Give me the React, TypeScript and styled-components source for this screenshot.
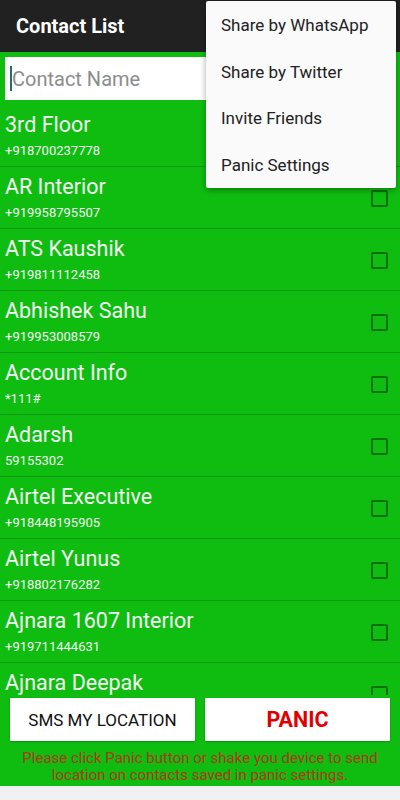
import React from "react";
import styled, { createGlobalStyle } from "styled-components";

interface TypesContact {
  name: string
  phone: string
}

const contacts: TypesContact[] = [
  { name: "3rd Floor", phone: "+918700237778" },
  { name: "AR Interior", phone: "+919958795507" },
  { name: "ATS Kaushik", phone: "+919811112458" },
  { name: "Abhishek Sahu", phone: "+919953008579" },
  { name: "Account Info", phone: "*111#" },
  { name: "Adarsh", phone: "59155302" },
  { name: "Airtel Executive", phone: "+918448195905" },
  { name: "Airtel Yunus", phone: "+918802176282" },
  { name: "Ajnara 1607 Interior", phone: "+919711444631" },
  { name: "Ajnara Deepak", phone: "" },
]

const menuItems = ["Share by WhatsApp", "Share by Twitter", "Invite Friends", "Panic Settings"]

const GlobalStyle = createGlobalStyle`
  body {
    margin: 0;
    font-family: Roboto, "Noto Sans", sans-serif;
  }
`

const Screen = styled.div`
  position: relative;
  width: 400px;
  height: 800px;
  display: flex;
  flex-direction: column;
  overflow: hidden;
`

const Header = styled.header`
  height: 52px;
  background: #212121;
  display: flex;
  align-items: center;
  padding-left: 16px;
  flex-shrink: 0;
`

const Title = styled.h1`
  margin: 0;
  color: #fff;
  font-size: 20px;
  font-weight: 700;
`

const Main = styled.main`
  flex: 1;
  background: #0ebd10;
  display: flex;
  flex-direction: column;
  min-height: 0;
`

const Search = styled.div`
  margin: 5px 5px 0;
  height: 43px;
  background: #fff;
  display: flex;
  align-items: center;
  padding-left: 5px;
  flex-shrink: 0;
`

const Cursor = styled.span`
  width: 2px;
  height: 25px;
  background: #1f6f6a;
`

const Placeholder = styled.span`
  color: #8c8c8c;
  font-size: 20px;
`

const List = styled.ul`
  list-style: none;
  margin: 5px 0 0;
  padding: 0;
  flex: 1;
  min-height: 0;
  overflow: hidden;
`

const Row = styled.li`
  height: 62px;
  box-sizing: border-box;
  border-bottom: 1px solid #0a9a0c;
  padding: 6px 12px 0 5px;
  display: flex;
  align-items: flex-start;
  justify-content: space-between;
`

const Info = styled.div`
  display: flex;
  flex-direction: column;
`

const Name = styled.span`
  color: #f4f4f4;
  font-size: 21.5px;
  line-height: 28px;
`

const Phone = styled.span`
  color: #f4f4f4;
  font-size: 13px;
  line-height: 18px;
  margin-top: 3px;
`

const Check = styled.span`
  width: 17px;
  height: 17px;
  box-sizing: border-box;
  border: 2px solid #087209;
  border-radius: 2px;
  margin-top: 17px;
`

const Bottom = styled.div`
  flex-shrink: 0;
  height: 91px;
  padding: 3px 10px 0;
  box-sizing: border-box;
  display: flex;
  flex-direction: column;
`

const Buttons = styled.div`
  display: flex;
  gap: 10px;
`

const Button = styled.button<{ $panic?: boolean }>`
  flex: 1;
  height: 43px;
  border: none;
  border-radius: 1px;
  background: #fff;
  font-family: Roboto, sans-serif;
  font-size: ${p => p.$panic ? "21.5px" : "17px"};
  font-weight: ${p => p.$panic ? 700 : 400};
  color: ${p => p.$panic ? "#e00000" : "#111"};
  box-shadow: 0 1px 2px rgba(0, 0, 0, 0.25);
`

const Notice = styled.p`
  margin: 9px 0 0;
  text-align: center;
  color: #b3351a;
  font-size: 15px;
  line-height: 17px;
`

const NavBar = styled.div`
  height: 14px;
  background: #f1f1f1;
  flex-shrink: 0;
`

const Menu = styled.ul`
  position: absolute;
  top: 1px;
  right: 4px;
  width: 190px;
  margin: 0;
  padding: 1px 0 0;
  list-style: none;
  background: #fafafa;
  border-radius: 2px;
  box-shadow: 0 2px 6px rgba(0, 0, 0, 0.35);
`

const MenuItem = styled.li`
  height: 46.5px;
  display: flex;
  align-items: center;
  padding-left: 15px;
  font-size: 17px;
  color: #212121;
`

const App = () => {
  return (
    <>
      <GlobalStyle />
      <Screen>
        <Header>
          <Title>Contact List</Title>
        </Header>
        <Main>
          <Search>
            <Cursor />
            <Placeholder>Contact Name</Placeholder>
          </Search>
          <List>
            {contacts.map(item => (
              <Row key={item.name}>
                <Info>
                  <Name>{item.name}</Name>
                  {item.phone && <Phone>{item.phone}</Phone>}
                </Info>
                <Check />
              </Row>
            ))}
          </List>
          <Bottom>
            <Buttons>
              <Button>SMS MY LOCATION</Button>
              <Button $panic>PANIC</Button>
            </Buttons>
            <Notice>
              Please click Panic button or shake you device to send<br />
              location on contacts saved in panic settings.
            </Notice>
          </Bottom>
        </Main>
        <NavBar />
        <Menu>
          {menuItems.map(item => (
            <MenuItem key={item}>{item}</MenuItem>
          ))}
        </Menu>
      </Screen>
    </>
  )
}

export default App
